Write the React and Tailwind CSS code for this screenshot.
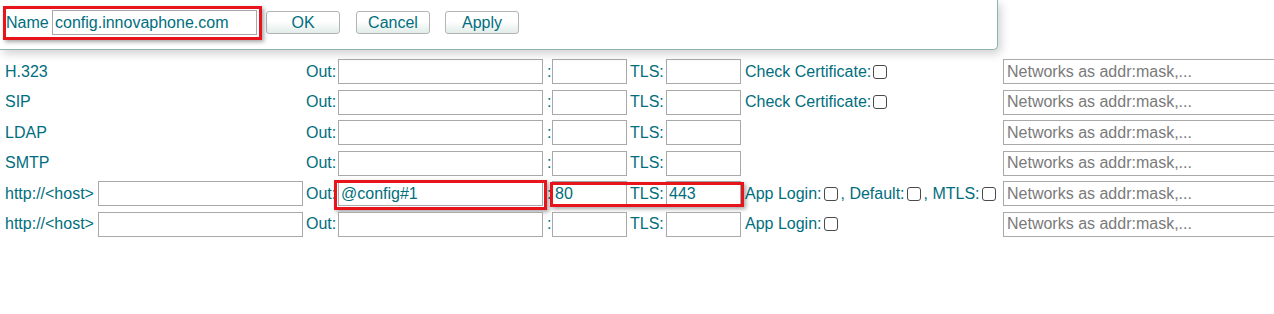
import React from 'react';

const rows = [
    { id: 'h323', label: 'H.323', extra: 'cert' },
    { id: 'sip', label: 'SIP', extra: 'cert' },
    { id: 'ldap', label: 'LDAP' },
    { id: 'smtp', label: 'SMTP' },
    { id: 'http1', label: 'http://<host>', host: true, out: '@config#1', port: '80', tls: '443', extra: 'full', marked: true },
    { id: 'http2', label: 'http://<host>', host: true, extra: 'app' },
];

const inputCls =
    'h-[25px] shrink-0 border border-[#a9a9a9] bg-white px-[2px] text-[16px] text-[#006e7e] outline-none placeholder:text-[#7a7a7a]';

// drawn box so it matches the windows chrome checkbox
const Check = () => (
    <span className="ml-[2px] mr-[3px] inline-block h-[14px] w-[14px] shrink-0 rounded-[3px] border border-[#4a4a4a] bg-white" />
);

const Extra = ({ kind }) => {
    if (kind === 'cert') {
        return (
            <span className="flex items-center whitespace-nowrap">
                Check Certificate:<Check />
            </span>
        );
    }
    if (kind === 'full') {
        return (
            <span className="flex items-center whitespace-nowrap">
                App Login:<Check />, Default:<Check />, MTLS:<Check />
            </span>
        );
    }
    if (kind === 'app') {
        return (
            <span className="flex items-center whitespace-nowrap">
                App Login:<Check />
            </span>
        );
    }
    return null;
};

const Button = ({ children, className = '' }) => (
    <button
        className={`h-[23px] w-[74px] shrink-0 rounded-[3px] border border-[#b4b4b4] bg-gradient-to-b from-white from-45% to-[#e1ece9] text-[16px] leading-none text-[#006e7e] ${className}`}
    >
        {children}
    </button>
);

const Popup = () => (
    <div className="absolute left-0 top-0 z-10 h-[50px] w-[998px] rounded-br-[5px] border-b-[1.5px] border-r-[1.5px] border-[#8db1b5] bg-white shadow-[3px_4px_10px_rgba(0,0,0,0.18)]">
        <div className="flex items-center pl-[6px] pt-[10px]">
            <span className="w-[46px] shrink-0">Name</span>
            <input readOnly value="config.innovaphone.com" className={`${inputCls} w-[205px]`} />
            <Button className="ml-[9px]">OK</Button>
            <Button className="ml-[16px]">Cancel</Button>
            <Button className="ml-[15px]">Apply</Button>
        </div>
        <div className="pointer-events-none absolute left-[3px] top-[6px] h-[34px] w-[259px] border-[3px] border-[#e8141b] shadow-[2px_2px_4px_rgba(0,0,0,0.35)]" />
    </div>
);

const Row = ({ row }) => (
    <div className="relative flex h-[25px] w-max items-center">
        <div className="flex w-[306px] shrink-0 items-center pl-[5px]">
            <span className="w-[93px] shrink-0 whitespace-nowrap">{row.label}</span>
            {row.host && <input readOnly className={`${inputCls} w-[205px]`} />}
        </div>
        <span className="w-[32px] shrink-0">Out:</span>
        <input readOnly value={row.out || ''} className={`${inputCls} w-[205px]`} />
        <span className="w-[9px] shrink-0 pl-[4px]">:</span>
        <input readOnly value={row.port || ''} className={`${inputCls} w-[75px]`} />
        <span className="w-[39px] shrink-0 pl-[3px]">TLS:</span>
        <input readOnly value={row.tls || ''} className={`${inputCls} w-[75px]`} />
        <div className="flex w-[262px] shrink-0 items-center pl-[4px]">
            <Extra kind={row.extra} />
        </div>
        <input readOnly placeholder="Networks as addr:mask,..." className={`${inputCls} w-[300px] pl-[3px]`} />
        {row.marked && (
            <>
                <div className="pointer-events-none absolute left-[334px] top-[-1px] h-[30px] w-[213px] border-[3px] border-[#e8141b] shadow-[2px_2px_4px_rgba(0,0,0,0.35)]" />
                <div className="pointer-events-none absolute left-[550px] top-[1px] h-[25px] w-[194px] border-[3px] border-[#e8141b] shadow-[2px_2px_4px_rgba(0,0,0,0.35)]" />
            </>
        )}
    </div>
);

const App = () => {
    return (
        <div className="relative h-[314px] w-[1274px] overflow-hidden bg-white font-['Liberation_Sans',Arial,sans-serif] text-[16px] text-[#006e7e]">
            <Popup />
            <div className="flex flex-col gap-y-[5.6px] pt-[59px]">
                {rows.map((row) => (
                    <Row key={row.id} row={row} />
                ))}
            </div>
        </div>
    );
};

export default App;
